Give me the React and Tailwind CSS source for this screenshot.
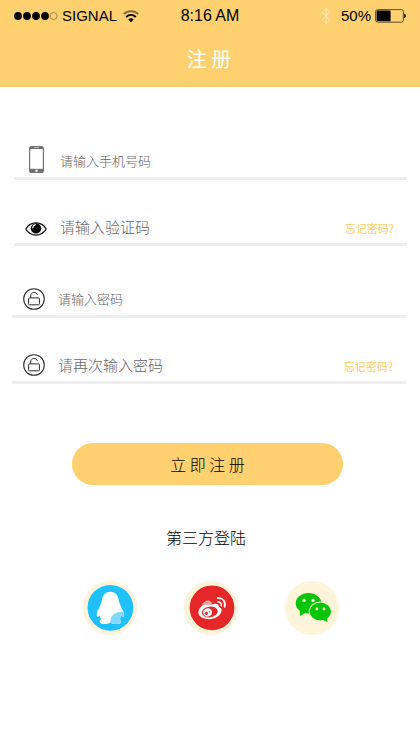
import { useState } from 'react'

// ── STATUS BAR ────────────────────────────────────────────
const SignalDots = () => (
  <svg width="44" height="10" viewBox="0 0 44 10" aria-hidden="true">
    {[4, 13, 22, 31].map(cx => (
      <circle key={cx} cx={cx} cy="5" r="3.9" fill="#000" />
    ))}
    <circle cx="39.6" cy="5" r="3.5" fill="none" stroke="#7a6435" strokeWidth="0.7" />
  </svg>
)

const WifiIcon = () => (
  <svg width="16" height="13" viewBox="0 0 16 13" fill="none" aria-hidden="true">
    <path d="M0.8 4.2C4.8 0.2 11.2 0.2 15.2 4.2" stroke="#7d6638" strokeWidth="1.7" />
    <path d="M3.2 7C6 4.3 10 4.3 12.8 7" stroke="#000" strokeWidth="1.8" />
    <path d="M5.3 9.5C6.7 7.9 9.3 7.9 10.7 9.5L8 12.2Z" fill="#000" />
  </svg>
)

const BluetoothIcon = () => (
  <svg width="10" height="18" viewBox="0 0 10 18" fill="none" aria-hidden="true">
    <path d="M0.8 4.8L8.8 12.8L5 16.6V1.4L8.8 5.2L0.8 13.2" stroke="#ffe7b5" strokeWidth="1.1" />
  </svg>
)

const BatteryIcon = () => (
  <svg width="31" height="14" viewBox="0 0 31 14" aria-hidden="true">
    <rect x="0.6" y="0.6" width="27.8" height="12.6" rx="2" fill="none" stroke="#4d3f20" strokeWidth="0.9" />
    <rect x="1.6" y="1.6" width="14" height="10.6" rx="0.8" fill="#000" />
    <path d="M29.2 4.8C31.4 5.4 31.4 8.4 29.2 9Z" fill="#000" />
  </svg>
)

const StatusBar = () => (
  <div className="grid h-8 grid-cols-[1fr_auto_1fr] items-center px-3.5 font-['Liberation_Sans',Arial,sans-serif] text-[15px] text-black">
    <div className="flex items-center gap-1">
      <SignalDots />
      <span>SIGNAL</span>
      <span className="ml-0.5">
        <WifiIcon />
      </span>
    </div>
    <span className="text-base">8:16 AM</span>
    <div className="flex items-center justify-end">
      <BluetoothIcon />
      <span className="ml-2.5 mr-1">50%</span>
      <BatteryIcon />
    </div>
  </div>
)

// ── FIELD ICONS ───────────────────────────────────────────
const PhoneIcon = () => (
  <svg width="15" height="27" viewBox="0 0 15 27" aria-hidden="true">
    <rect width="15" height="27" rx="2.6" fill="#727070" />
    <rect x="1.2" y="3" width="12.6" height="19.8" fill="#fff" />
    <rect x="5" y="1.2" width="5" height="0.8" rx="0.4" fill="#ddd" />
    <circle cx="7.5" cy="24.8" r="1.3" fill="#fff" />
  </svg>
)

const EyeIcon = () => (
  <svg width="22" height="14" viewBox="0 0 22 14" aria-hidden="true">
    <path d="M0.8 7C5.6 -1.1 16.4 -1.1 21.2 7C16.4 15.1 5.6 15.1 0.8 7Z" fill="#fff" stroke="#000" strokeWidth="1.2" />
    <circle cx="11" cy="6.4" r="5.2" fill="#000" />
    <path d="M7.7 5.8C7.9 4.2 8.8 3.1 10.3 2.7" fill="none" stroke="#fff" strokeWidth="1.2" strokeLinecap="round" />
  </svg>
)

const LockIcon = () => (
  <svg width="22" height="22" viewBox="0 0 22 22" fill="none" stroke="#2b2b2b" aria-hidden="true">
    <circle cx="11" cy="11" r="10.3" strokeWidth="1.1" />
    <rect x="5.6" y="9.9" width="10.8" height="6.9" rx="0.9" strokeWidth="1" />
    <path d="M7.7 9.9V8C7.7 3.6 13.6 3.4 14.4 6.9" strokeWidth="1" />
  </svg>
)

// ── SINGLE FIELD ROW ──────────────────────────────────────
const FieldRow = ({ icon, iconClass, field, value, onChange }) => (
  <div className="flex h-[35px] items-center border-b-[3px] border-[#eeeeee] pr-[13px]">
    <label htmlFor={field.id} className={`flex w-11 shrink-0 ${iconClass}`}>
      {icon}
    </label>
    <input
      id={field.id}
      type={field.type}
      value={value}
      onChange={(e) => onChange(field.id, e.target.value)}
      placeholder={field.placeholder}
      aria-label={field.placeholder}
      className={`ml-0.5 min-w-0 flex-1 bg-transparent font-light text-black outline-none placeholder:text-[#666666] ${
        field.large ? 'text-[15px]' : 'text-[13px]'
      }`}
    />
    {field.link && (
      <a href="#forgot" className="shrink-0 pt-0.5 text-[11px] leading-4 text-[#ffcb62]">
        {field.link}
      </a>
    )}
  </div>
)

// ── THIRD PARTY LOGOS ─────────────────────────────────────
const QQLogo = () => (
  <svg width="54" height="54" viewBox="0 0 54 54" aria-hidden="true">
    <circle cx="27" cy="27" r="27" fill="#fdf4d9" />
    <circle cx="27.4" cy="26.8" r="22.9" fill="#1ec1fd" />
    <path
      d="M27.3 10.8C22 10.8 19.2 14.8 18.9 19.6C18.8 21.2 17.8 22.6 17.2 24.4C16.8 26.4 14.8 28.4 14 31.6C13.5 33.8 13.6 35.6 14.4 35.9C15.2 36.1 16 35.2 16.6 34.4C16.9 36 17.5 37.2 18.4 38.2C16.9 38.9 16.4 40 16.8 41.2C17.4 43 21 43.2 23.8 42.9C25.4 42.7 26.6 42.2 27.4 41.6C28.4 42.4 30 42.8 31.4 42.9C34.4 43.2 37.6 43 38.1 41.2C38.4 39.9 37.8 38.9 36.4 38.2C37.3 37.2 38 36 38.2 34.4C38.8 35.2 39.7 36.1 40.5 35.9C41.3 35.6 41.3 33.8 40.8 31.6C40 28.4 38 26.4 37.5 24.4C37 22.6 35.9 21.2 35.8 19.6C35.4 14.8 32.6 10.8 27.3 10.8Z"
      fill="#fff"
    />
    <path
      d="M27.4 41.6C26.6 35.8 31.4 29.8 40.5 30.8C41.3 33.4 41.4 35.6 40.5 35.9C39.7 36.1 38.8 35.2 38.2 34.4C38 36 37.3 37.2 36.4 38.2C37.8 38.9 38.4 39.9 38.1 41.2C37.6 43 34.4 43.2 31.4 42.9C30 42.8 28.4 42.4 27.4 41.6Z"
      fill="#82d9fe"
    />
  </svg>
)

const WeiboLogo = () => (
  <svg width="54" height="54" viewBox="0 0 54 54" aria-hidden="true">
    <circle cx="27" cy="27" r="27" fill="#fdf4d9" />
    <circle cx="28" cy="26.8" r="22.4" fill="#e62727" />
    <path
      d="M14.4 31.6C14.4 28 17.6 24.4 21 22.8C23.6 21.6 26.6 21.8 27.4 23.6C30.6 22.2 35.2 22 34.9 25.8C37 26.5 37.9 27.8 37.6 29.8C37 34.5 31.3 38.2 25 38.2C19 38.2 14.4 35.5 14.4 31.6Z"
      fill="#fff"
    />
    <path d="M18.2 24.6C18.8 21.4 21.8 19 25 19.6C27.2 20.2 28.2 22 27.6 24C24.4 23.6 21.4 23.8 18.2 24.6Z" fill="#f6a5a0" />
    <ellipse cx="25.8" cy="31" rx="8" ry="5.4" transform="rotate(-7 25.8 31)" fill="#e62727" />
    <ellipse cx="23.6" cy="31.4" rx="4.5" ry="4.1" transform="rotate(-15 23.6 31.4)" fill="#fff" />
    <circle cx="22.4" cy="32.3" r="1.6" fill="#e62727" />
    <circle cx="25.4" cy="30.8" r="0.7" fill="#e62727" />
    <path d="M34 21C36.2 20.7 37.8 22.4 37.2 24.8" fill="none" stroke="#fff" strokeWidth="1.5" strokeLinecap="round" />
    <path d="M33.6 17.2C38.8 16.4 42 20.6 40.6 25.8" fill="none" stroke="#fff" strokeWidth="1.8" strokeLinecap="round" />
  </svg>
)

const WechatLogo = () => (
  <svg width="54" height="54" viewBox="0 0 54 54" aria-hidden="true">
    <circle cx="27" cy="27" r="27" fill="#fdf4d9" />
    <ellipse cx="23.5" cy="22.3" rx="12.8" ry="10.2" fill="#07c507" />
    <path d="M14.8 28L15 35L21.4 31.4Z" fill="#07c507" />
    <circle cx="19" cy="19.4" r="1.7" fill="#fdf4d9" />
    <circle cx="28" cy="19.4" r="1.7" fill="#fdf4d9" />
    <ellipse cx="35.3" cy="30.5" rx="11.6" ry="9.9" fill="#fdf4d9" />
    <ellipse cx="35.3" cy="30.5" rx="10.7" ry="9" fill="#07c507" />
    <path d="M37 38.6L42.4 41L41.8 35.6Z" fill="#07c507" />
    <circle cx="31.9" cy="28" r="1.4" fill="#fdf4d9" />
    <circle cx="39" cy="28" r="1.4" fill="#fdf4d9" />
  </svg>
)

const codeFields = [
  { id: 'phone', type: 'tel', placeholder: '请输入手机号码' },
  { id: 'code', type: 'text', placeholder: '请输入验证码', large: true, link: '忘记密码?' },
]

const passwordFields = [
  { id: 'password', type: 'password', placeholder: '请输入密码' },
  { id: 'confirm', type: 'password', placeholder: '请再次输入密码', large: true, link: '忘记密码?' },
]

const icons = {
  phone: { icon: <PhoneIcon />, iconClass: 'justify-center pb-1' },
  code: { icon: <EyeIcon />, iconClass: 'justify-center pt-1' },
  password: { icon: <LockIcon />, iconClass: 'justify-center' },
  confirm: { icon: <LockIcon />, iconClass: 'justify-center' },
}

const socials = [
  { id: 'qq', label: 'QQ', logo: <QQLogo /> },
  { id: 'weibo', label: '微博', logo: <WeiboLogo /> },
  { id: 'wechat', label: '微信', logo: <WechatLogo /> },
]

// ── REGISTER PAGE ─────────────────────────────────────────
const App = () => {
  const [values, setValues] = useState({ phone: '', code: '', password: '', confirm: '' })

  const handleChange = (id, value) => {
    setValues({ ...values, [id]: value })
  }

  const renderField = (field) => (
    <FieldRow
      key={field.id}
      field={field}
      icon={icons[field.id].icon}
      iconClass={icons[field.id].iconClass}
      value={values[field.id]}
      onChange={handleChange}
    />
  )

  return (
    <div className="min-h-screen bg-white font-['Noto_Sans_CJK_SC',sans-serif]">
      <header className="bg-[#ffd06f] pb-3.5">
        <StatusBar />
        <h1 className="pr-0.5 pt-3 text-center text-xl leading-[29px] text-white">注 册</h1>
      </header>

      <main className="pt-[58px]">
        <form onSubmit={(e) => e.preventDefault()}>
          <div className="ml-3.5 mr-[13px] flex flex-col gap-[31px]">
            {codeFields.map(renderField)}
          </div>
          <div className="ml-3 mr-3.5 mt-[37px] flex flex-col gap-[31px]">
            {passwordFields.map(renderField)}
          </div>

          <div className="mt-[59px] pl-[72px] pr-[77px]">
            <button
              type="submit"
              className="h-[42px] w-full rounded-full bg-[#ffd06f] text-base font-light text-black"
            >
              立 即 注 册
            </button>
          </div>
        </form>

        <p className="mt-10 pr-2 text-center text-base font-light leading-6 text-black">第三方登陆</p>

        {/* THIRD PARTY LOGIN */}
        <div className="mt-8 flex justify-center gap-[47px] pl-0.5">
          {socials.map(s => (
            <button key={s.id} type="button" aria-label={s.label} className="rounded-full">
              {s.logo}
            </button>
          ))}
        </div>
      </main>
    </div>
  )
}

export default App
